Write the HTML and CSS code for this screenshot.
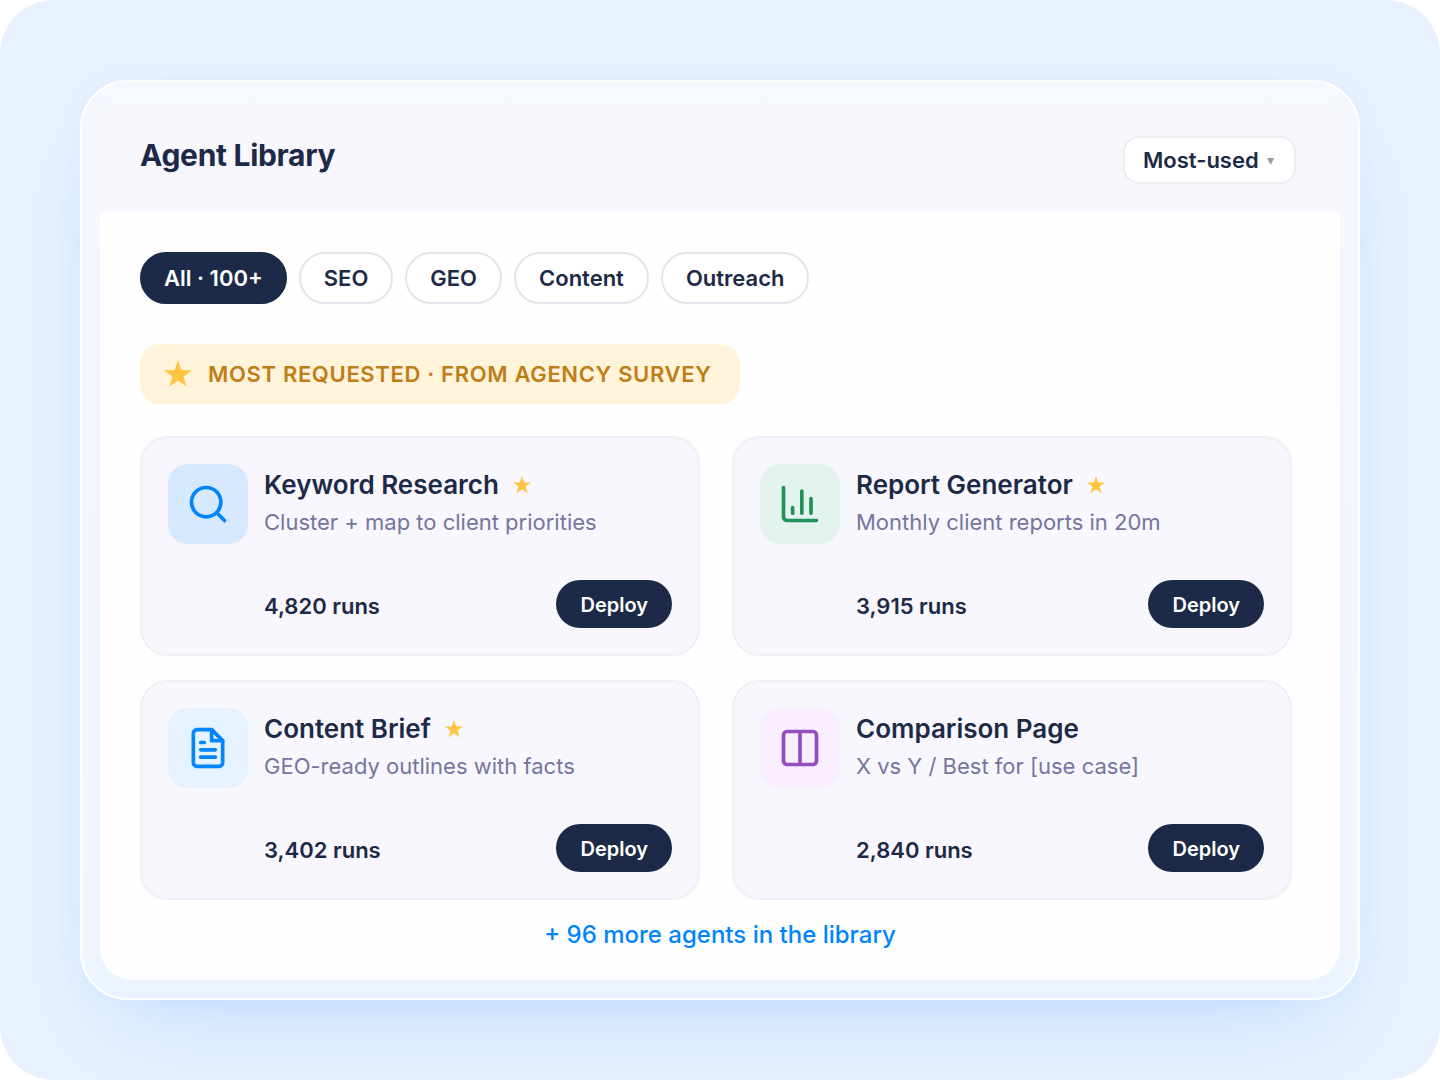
FILE: index.html
```html
<!DOCTYPE html>
<html lang="en">
<head>
    <meta charset="UTF-8">
    <meta name="viewport" content="width=device-width, initial-scale=1">
    <title>Agent Library</title>
    <link rel="stylesheet" href="styles.css">
</head>
<body>

    <!-- shared star shape -->
    <svg class="defs" aria-hidden="true">
        <symbol id="star" viewBox="0 0 24 24">
            <path d="M12 0l2.9 8.6 9.1.1-7.3 5.4 2.7 8.8L12 17.6l-7.4 5.3 2.7-8.8L0 8.7l9.1-.1z"/>
        </symbol>
    </svg>

    <div class="stage">
        <main class="window">
            <header class="header">
                <h1>Agent Library</h1>
                <div class="sort">
                    <select aria-label="Sort agents">
                        <option>Most-used</option>
                    </select>
                    <span class="arrow" aria-hidden="true">▾</span>
                </div>
            </header>

            <div class="content">
                <nav class="filters">
                    <button class="chip active">All · 100+</button>
                    <button class="chip">SEO</button>
                    <button class="chip">GEO</button>
                    <button class="chip">Content</button>
                    <button class="chip">Outreach</button>
                </nav>

                <p class="banner">
                    <svg class="star"><use href="#star"/></svg>
                    MOST REQUESTED · FROM AGENCY SURVEY
                </p>

                <section class="grid">
                    <article class="card">
                        <div class="card-top">
                            <div class="icon search">
                                <svg viewBox="0 0 24 24"><circle cx="11" cy="11" r="8"/><path d="M21 21l-4.35-4.35"/></svg>
                            </div>
                            <div class="info">
                                <h2>Keyword Research <svg class="star"><use href="#star"/></svg></h2>
                                <p>Cluster + map to client priorities</p>
                            </div>
                        </div>
                        <div class="card-bottom">
                            <span>4,820 runs</span>
                            <button class="deploy">Deploy</button>
                        </div>
                    </article>

                    <article class="card">
                        <div class="card-top">
                            <div class="icon report">
                                <svg viewBox="0 0 24 24"><path d="M3 3v16a2 2 0 0 0 2 2h16M18 17V9M13 17V5M8 17v-3"/></svg>
                            </div>
                            <div class="info">
                                <h2>Report Generator <svg class="star"><use href="#star"/></svg></h2>
                                <p>Monthly client reports in 20m</p>
                            </div>
                        </div>
                        <div class="card-bottom">
                            <span>3,915 runs</span>
                            <button class="deploy">Deploy</button>
                        </div>
                    </article>

                    <article class="card">
                        <div class="card-top">
                            <div class="icon brief">
                                <svg viewBox="0 0 24 24"><path d="M14 2H6a2 2 0 0 0-2 2v16a2 2 0 0 0 2 2h12a2 2 0 0 0 2-2V8z"/><path d="M14 2v6h6M16 13H8M16 17H8M10 9H8"/></svg>
                            </div>
                            <div class="info">
                                <h2>Content Brief <svg class="star"><use href="#star"/></svg></h2>
                                <p>GEO-ready outlines with facts</p>
                            </div>
                        </div>
                        <div class="card-bottom">
                            <span>3,402 runs</span>
                            <button class="deploy">Deploy</button>
                        </div>
                    </article>

                    <article class="card">
                        <div class="card-top">
                            <div class="icon compare">
                                <svg viewBox="0 0 24 24"><rect x="3" y="3" width="18" height="18" rx="2"/><path d="M12 3v18"/></svg>
                            </div>
                            <div class="info">
                                <h2>Comparison Page</h2>
                                <p>X vs Y / Best for [use case]</p>
                            </div>
                        </div>
                        <div class="card-bottom">
                            <span>2,840 runs</span>
                            <button class="deploy">Deploy</button>
                        </div>
                    </article>
                </section>

                <a class="more" href="#">+ 96 more agents in the library</a>
            </div>
        </main>
    </div>

</body>
</html>
```
FILE: styles.css
```css
* {
    box-sizing: border-box;
}

body {
    margin: 0;
    background: #ffffff;
    color: #1c2a47;
    font-family: Inter, "Liberation Sans", sans-serif;
}

h1, h2, p {
    margin: 0;
}

button, select {
    font-family: inherit;
    cursor: pointer;
}

.defs {
    display: none;
}

.stage {
    min-height: 100vh;
    padding: 80px;
    background: #e7f1ff;
    border-radius: 54px;
    overflow: hidden;
}

.window {
    padding: 18px;
    border: 2px solid #ffffff;
    border-radius: 48px;
    background: linear-gradient(90deg, #f2f7ff, rgba(242, 247, 255, 0) 24px, rgba(242, 247, 255, 0) calc(100% - 24px), #f2f7ff),
        linear-gradient(#f5f9ff, #f7f7fd 40px, #f7f7fd 140px, #f2f6ff 240px, #eaf3ff);
    box-shadow: 0 48px 96px -40px rgba(0, 132, 255, 0.2), 0 0 40px -8px rgba(0, 132, 255, 0.06);
}

.header {
    display: flex;
    justify-content: space-between;
    align-items: flex-start;
    padding: 36px 44px 28px 40px;
}

h1 {
    font-size: 30px;
    line-height: 38px;
    font-weight: 700;
    letter-spacing: -0.01em;
}

.sort {
    display: flex;
    align-items: center;
    gap: 8px;
    height: 48px;
    padding: 0 20px 0 18px;
    background: #ffffff;
    border: 2px solid #ededf3;
    border-radius: 16px;
}

.sort select {
    appearance: none;
    padding: 0;
    border: none;
    background: none;
    color: inherit;
    font-size: 22px;
    font-weight: 600;
}

.arrow {
    color: #999999;
    font-size: 14px;
    line-height: 16px;
}

.content {
    display: flex;
    flex-direction: column;
    align-items: flex-start;
    padding: 40px 40px 28px;
    background: #fefefe;
    border-radius: 0 0 32px 32px;
}

.filters {
    display: flex;
    flex-wrap: wrap;
    gap: 12px;
}

.chip {
    height: 52px;
    padding: 0 23px;
    background: #ffffff;
    color: #1c2a47;
    border: 2px solid #e5e4ec;
    border-radius: 26px;
    font-size: 22px;
    font-weight: 600;
}

.chip.active {
    padding: 0 22px;
    background: #1c2a47;
    border-color: #1c2a47;
    color: #ffffff;
}

.banner {
    display: flex;
    align-items: center;
    gap: 16px;
    margin: 40px 0 32px;
    padding: 16px 28px 16px 24px;
    background: #fff3da;
    color: #bf7d16;
    border-radius: 20px;
    font-size: 22px;
    line-height: 28px;
    font-weight: 600;
    letter-spacing: 0.03em;
}

.star {
    width: 18px;
    height: 18px;
    fill: #ffc542;
}

.banner .star {
    width: 28px;
    height: 28px;
}

.grid {
    display: grid;
    grid-template-columns: 1fr 1fr;
    gap: 24px 32px;
    align-self: stretch;
    padding-right: 8px;
}

.card {
    padding: 26px;
    background: #f7f7fd;
    border: 2px solid #efeff6;
    border-radius: 28px;
}

.card-top {
    display: flex;
    gap: 16px;
}

.icon {
    display: flex;
    align-items: center;
    justify-content: center;
    width: 80px;
    height: 80px;
    border-radius: 20px;
}

.icon svg {
    width: 44px;
    height: 44px;
    fill: none;
    stroke: currentColor;
    stroke-width: 2;
    stroke-linecap: round;
    stroke-linejoin: round;
}

.search {
    background: #d7e9ff;
    color: #0084ff;
}

.report {
    background: #e3f3ed;
    color: #219359;
}

.brief {
    background: #e5f2ff;
    color: #0084ff;
}

.compare {
    background: #f9eefe;
    color: #9150bd;
}

.info {
    display: flex;
    flex-direction: column;
    gap: 6px;
    padding-top: 4px;
}

h2 {
    display: flex;
    align-items: center;
    gap: 14px;
    font-size: 26px;
    line-height: 34px;
    font-weight: 600;
}

.info p {
    color: #7675a0;
    font-size: 22px;
    line-height: 28px;
}

.card-bottom {
    display: flex;
    justify-content: space-between;
    align-items: center;
    margin-top: 36px;
    padding-left: 96px;
    font-size: 22px;
    font-weight: 600;
}

.card-bottom span {
    padding-top: 4px;
}

.deploy {
    height: 48px;
    padding: 2px 24px 0;
    background: #1c2a47;
    color: #ffffff;
    border: none;
    border-radius: 24px;
    font-size: 20px;
    font-weight: 600;
}

.more {
    align-self: center;
    margin-top: 18px;
    color: #0084ff;
    font-size: 24px;
    line-height: 34px;
    font-weight: 500;
    text-decoration: none;
}
```
